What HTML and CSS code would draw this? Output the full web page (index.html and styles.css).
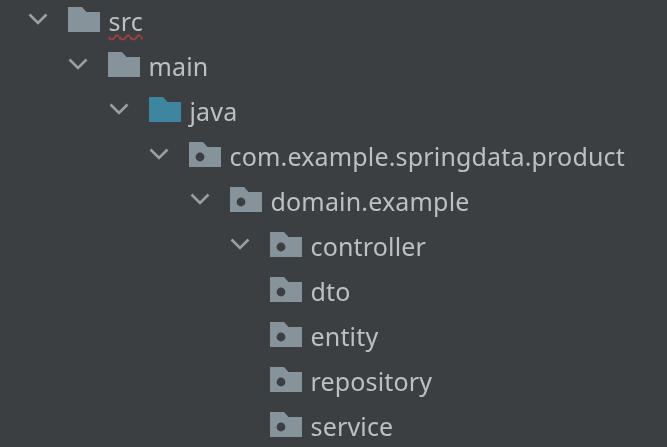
FILE: index.html
```html
<!DOCTYPE html>
<html lang="en">
<head>
<meta charset="utf-8">
<title>Project tree</title>
<link rel="stylesheet" href="styles.css">
</head>
<body>
<svg class="defs" width="0" height="0" aria-hidden="true">
  <defs>
    <symbol id="chev" viewBox="0 0 20 12"><path d="M1.5 1.5 L10 10 L18.5 1.5" fill="none" stroke="#9b9fa1" stroke-width="2.6"/></symbol>
    <symbol id="folder" viewBox="0 0 32 25"><path d="M0 0 H14 L18.5 5 H32 V25 H0 Z" fill="currentColor"/></symbol>
    <symbol id="pkg" viewBox="0 0 32 25"><path d="M0 0 H14 L18.5 5 H32 V25 H0 Z" fill="#87939a"/><circle cx="11" cy="15" r="4.4" fill="#3c3f41"/></symbol>
  </defs>
</svg>
<ul class="tree">
  <li class="row d0"><svg class="chev"><use href="#chev"/></svg><svg class="icon plain"><use href="#folder"/></svg><span class="label squiggle">src</span></li>
  <li class="row d1"><svg class="chev"><use href="#chev"/></svg><svg class="icon plain"><use href="#folder"/></svg><span class="label">main</span></li>
  <li class="row d2"><svg class="chev"><use href="#chev"/></svg><svg class="icon source"><use href="#folder"/></svg><span class="label">java</span></li>
  <li class="row d3"><svg class="chev"><use href="#chev"/></svg><svg class="icon"><use href="#pkg"/></svg><span class="label">com.example.springdata.product</span></li>
  <li class="row d4"><svg class="chev"><use href="#chev"/></svg><svg class="icon"><use href="#pkg"/></svg><span class="label">domain.example</span></li>
  <li class="row d5"><svg class="chev"><use href="#chev"/></svg><svg class="icon"><use href="#pkg"/></svg><span class="label">controller</span></li>
  <li class="row d5"><span class="nochev"></span><svg class="icon"><use href="#pkg"/></svg><span class="label">dto</span></li>
  <li class="row d5"><span class="nochev"></span><svg class="icon"><use href="#pkg"/></svg><span class="label">entity</span></li>
  <li class="row d5"><span class="nochev"></span><svg class="icon"><use href="#pkg"/></svg><span class="label">repository</span></li>
  <li class="row d5"><span class="nochev"></span><svg class="icon"><use href="#pkg"/></svg><span class="label">service</span></li>
</ul>
</body>
</html>
```

FILE: styles.css
```css
html, body {
  margin: 0;
  height: 100%;
  background: #3c3f41;
  overflow: hidden;
}
.defs { position: absolute; }
.tree {
  list-style: none;
  margin: 0;
  padding: 0;
  filter: blur(0.7px);
  font-family: "Noto Sans", "Open Sans", sans-serif;
  font-size: 25px;
  letter-spacing: 0.17px;
  color: #bcc0c2;
}
.row {
  display: flex;
  align-items: center;
  height: 45px;
  margin-top: 0;
  white-space: nowrap;
  transform: translateY(-2px);
}
.d0 { padding-left: 28px; }
.d1 { padding-left: 68px; }
.d2 { padding-left: 109px; }
.d3 { padding-left: 149px; }
.d4 { padding-left: 190px; }
.d5 { padding-left: 230px; }
.chev, .nochev {
  width: 20px;
  height: 12px;
  margin-right: 20px;
  flex: none;
}
.chev { position: relative; top: -2px; }
.icon {
  width: 32px;
  height: 25px;
  margin-right: 8.5px;
  flex: none;
  position: relative;
  top: -1px;
}
.plain { color: #87939a; }
.source { color: #3e86a0; }
.squiggle {
  text-decoration: underline wavy #a0413d 1.5px;
  text-underline-offset: 3px;
}
```
